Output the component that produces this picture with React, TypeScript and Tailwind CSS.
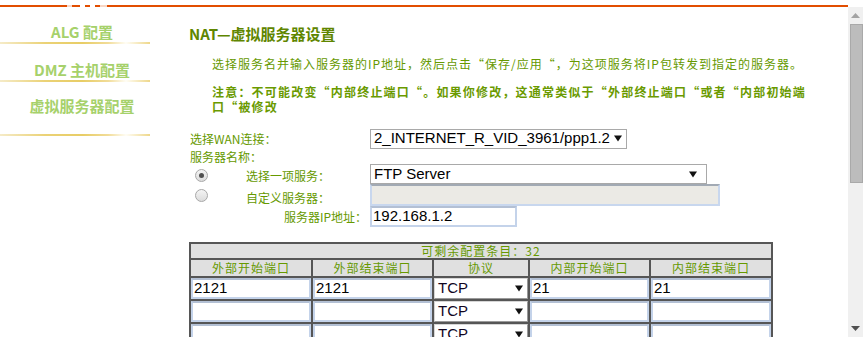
import React from "react";

const Arrow = () => (
  <svg width="8" height="7" viewBox="0 0 8 7" className="shrink-0">
    <path d="M0 0.5h8L4 6.5z" fill="#111" />
  </svg>
);

const NavItem = ({ label, cls }: { label: string; cls: string }) => (
  <div className={cls}>
    <div className="w-[164px] h-[20px] leading-[20px] text-center text-[15px] font-bold text-[#a6d16b] font-['Noto_Sans_CJK_SC','Noto_Sans',sans-serif]">
      {label}
    </div>
  </div>
);

const GoldLine = ({ cls }: { cls: string }) => (
  <div
    className={`w-[150px] h-[2px] bg-[linear-gradient(to_right,#f5ebc8_0%,#ebd276_30%,#e8cd66_55%,#f1dc98_72%,#fffdf5_84%,#eed78a_100%)] ${cls}`}
  />
);

const TextInput = ({ value, w }: { value?: string; w: string }) => (
  <div
    className={`${w} h-full bg-white border-2 border-[#c4d3ea] border-t-[#b3c0d4] flex items-center pl-[1px] text-[15px] text-black font-['Liberation_Sans',Arial,sans-serif]`}
  >
    {value}
  </div>
);

const ProtoSelect = () => (
  <div className="h-full w-full bg-white border border-[#d6d6d6] border-r-[#9a9a9a] border-b-[#9a9a9a] flex items-center justify-between pl-[3px] pr-[4px] text-[15px] text-[#10051e] font-['Liberation_Sans',Arial,sans-serif]">
    <span>TCP</span>
    <Arrow />
  </div>
);

export default function App() {
  const cjk = "font-['Noto_Sans_CJK_SC','Noto_Sans',sans-serif]";
  return (
    <div className="w-[863px] h-[351px] bg-white overflow-hidden">
      <div className="h-[5px]" />
      <div className="flex h-[2px] w-[848px]">
        <div className="w-[67px] bg-[#e24d00]" />
        <div className="w-[5px] bg-[#f8d6c4]" />
        <div className="w-[8px] bg-[#e24d00]" />
        <div className="w-[5px]" />
        <div className="w-[5px] bg-[#e24d00]" />
        <div className="w-[5px]" />
        <div className="w-[5px] bg-[#e24d00]" />
        <div className="w-[7px] bg-[#f8d6c4]" />
        <div className="flex-1 bg-[#e24d00]" />
      </div>
      <div className="flex h-[330px]">
        <div className="w-[848px] flex overflow-hidden">
          {/* left nav */}
          <nav className="w-[189px] shrink-0 flex flex-col">
            <NavItem label="ALG 配置" cls="mt-[15px]" />
            <GoldLine cls="" />
            <NavItem label="DMZ 主机配置" cls="mt-[16px]" />
            <GoldLine cls="" />
            <NavItem label="虚拟服务器配置" cls="mt-[14px]" />
            <GoldLine cls="mt-[18px]" />
          </nav>

          {/* main */}
          <main className={`flex-1 flex flex-col ${cjk}`}>
            <h1 className="mt-[17px] h-[20px] leading-[20px] text-[15px] font-bold text-[#5f8600] whitespace-nowrap">
              NAT—虚拟服务器设置
            </h1>
            <p className="mt-[12px] pl-[23px] h-[16px] leading-[16px] text-[12px] tracking-[1px] text-[#669900] whitespace-nowrap">
              选择服务名并输入服务器的IP地址，然后点击“保存/应用“，为这项服务将IP包转发到指定的服务器。
            </p>
            <div className="mt-[12px] pl-[23px] text-[12px] tracking-[1.2px] font-bold text-[#6a9a00] whitespace-nowrap flex flex-col">
              <span className="h-[15px] leading-[15px]">
                注意：不可能改变“内部终止端口“。如果你修改，这通常类似于“外部终止端口“或者“内部初始端
              </span>
              <span className="h-[15px] leading-[15px]">口“被修改</span>
            </div>

            {/* form */}
            <div className="mt-[14px] flex flex-col text-[12px] text-[#669900]">
              <div className="h-[21px] flex items-center">
                <span className="w-[181px] shrink-0 pl-[1px] whitespace-nowrap">选择WAN连接：</span>
                <div className="w-[257px] h-[20px] bg-white border border-[#a9a9a9] flex items-center justify-between pl-[3px] pr-[4px] text-[15px] text-black font-['Liberation_Sans',Arial,sans-serif]">
                  <span>2_INTERNET_R_VID_3961/ppp1.2</span>
                  <Arrow />
                </div>
              </div>
              <div className="h-[15px] flex items-center pl-[1px] pt-[1px]">服务器名称：</div>
              <div className="h-[20px] flex items-center">
                <div className="w-[57px] shrink-0 pl-[6px] flex items-center pt-[2px]">
                  <div className="w-[13px] h-[13px] rounded-full border border-[#a8a8a8] bg-[linear-gradient(#f4f4f4,#dcdcdc)] flex items-center justify-center">
                    <div className="w-[5px] h-[5px] rounded-full bg-[#505050]" />
                  </div>
                </div>
                <span className="w-[124px] shrink-0 pt-[4px] whitespace-nowrap">选择一项服务：</span>
                <div className="w-[337px] h-[20px] bg-white border border-[#a9a9a9] flex items-center justify-between pl-[3px] pr-[9px] text-[15px] text-black font-['Liberation_Sans',Arial,sans-serif]">
                  <span>FTP Server</span>
                  <Arrow />
                </div>
              </div>
              <div className="h-[21px] flex items-center">
                <div className="w-[57px] shrink-0 pl-[6px] flex items-center pt-[2px]">
                  <div className="w-[13px] h-[13px] rounded-full border border-[#a8a8a8] bg-[linear-gradient(#f4f4f4,#dcdcdc)]" />
                </div>
                <span className="w-[124px] shrink-0 pt-[6px] whitespace-nowrap">自定义服务器：</span>
                <div className="w-[350px] h-[22px] bg-[#ebeae5] border-2 border-[#c8d7ee] border-t-[#a2aab4]" />
              </div>
              <div className="mt-[1px] h-[21px] flex items-center">
                <span className="w-[181px] shrink-0 pl-[95px] whitespace-nowrap">服务器IP地址：</span>
                <TextInput value="192.168.1.2" w="w-[147px]" />
              </div>
            </div>

            {/* table */}
            <div className="mt-[15px] w-[584px] bg-[#565656] p-[2px] grid grid-cols-[120px_119px_94px_119px_120px] gap-[2px] text-[12px] text-[#669900]">
              <div className="col-span-5 h-[14px] bg-[#e0e0e0] flex items-center justify-center tracking-[1px]">
                可剩余配置条目：32
              </div>
              {["外部开始端口", "外部结束端口", "协议", "内部开始端口", "内部结束端口"].map((h) => (
                <div key={h} className="h-[16px] bg-[#e0e0e0] flex items-center justify-center tracking-[1px]">
                  {h}
                </div>
              ))}
              {[0, 1, 2].map((r) => (
                <React.Fragment key={r}>
                  <div className="h-[21px]"><TextInput value={r === 0 ? "2121" : ""} w="w-full" /></div>
                  <div className="h-[21px]"><TextInput value={r === 0 ? "2121" : ""} w="w-full" /></div>
                  <div className="h-[21px] bg-white"><ProtoSelect /></div>
                  <div className="h-[21px]"><TextInput value={r === 0 ? "21" : ""} w="w-full" /></div>
                  <div className="h-[21px]"><TextInput value={r === 0 ? "21" : ""} w="w-full" /></div>
                </React.Fragment>
              ))}
            </div>
          </main>
        </div>

        {/* scrollbar */}
        <div className="w-[15px] h-[330px] bg-[#f0f0f0] flex flex-col items-center">
          <svg width="9" height="5" viewBox="0 0 9 5" className="mt-[6px]">
            <path d="M0 5L4.5 0L9 5z" fill="#a3a3a3" />
          </svg>
          <div className="mt-[6px] ml-[2px] w-[13px] h-[159px] bg-[#bcbcbc] border border-[#a9a9a9]" />
          <div className="flex-1" />
          <svg width="9" height="5" viewBox="0 0 9 5" className="mb-[6px]">
            <path d="M0 0h9L4.5 5z" fill="#505050" />
          </svg>
        </div>
      </div>
    </div>
  );
}
